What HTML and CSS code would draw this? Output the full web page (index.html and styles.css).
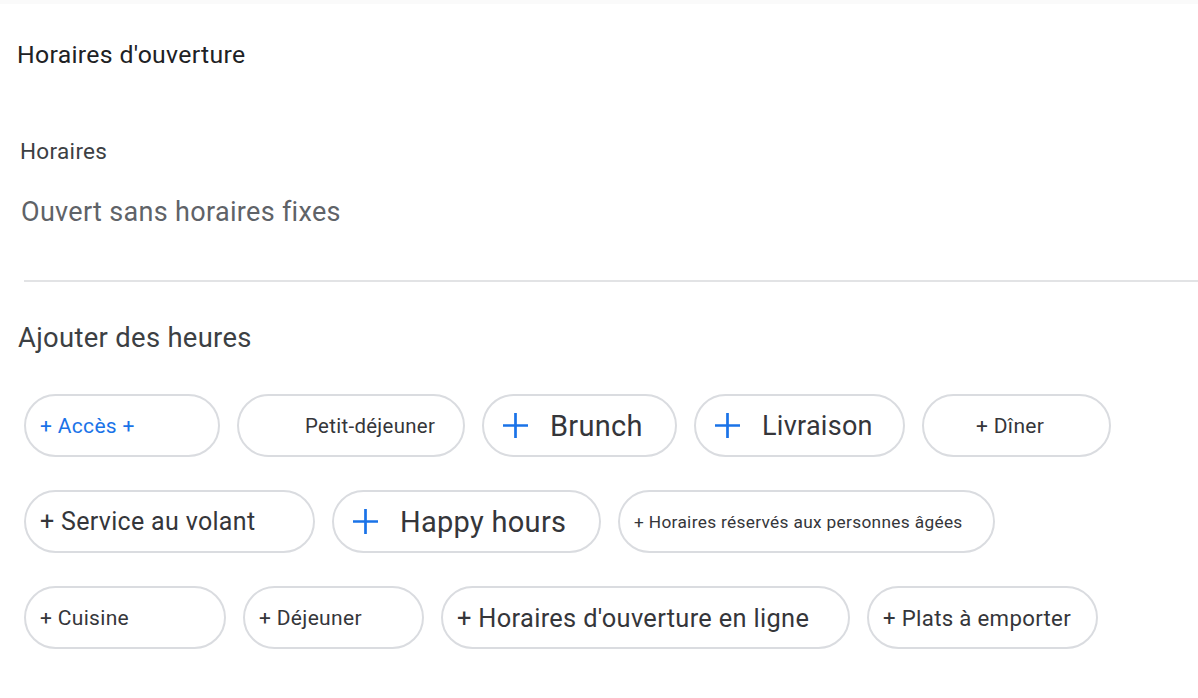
FILE: index.html
```html
<!DOCTYPE html>
<html lang="fr">
<head>
<meta charset="utf-8">
<title>Horaires d'ouverture</title>
<link rel="stylesheet" href="styles.css">
</head>
<body>
<div class="topband"></div>
<main class="page">
  <h2 class="title">Horaires d'ouverture</h2>
  <section class="field">
    <div class="field-label">Horaires</div>
    <div class="field-value">Ouvert sans horaires fixes</div>
  </section>
  <hr class="divider">
  <h3 class="add-title">Ajouter des heures</h3>
  <div class="chips">
    <div class="chip-row">
      <button class="chip chip--md chip--blue w-acces">+ Accès +</button>
      <button class="chip chip--petit w-petit">Petit-déjeuner</button>
      <button class="chip chip--xl chip--icon w-brunch"><svg class="plus" viewBox="0 0 24 24"><path d="M12 0v24M0 12h24"/></svg><span>Brunch</span></button>
      <button class="chip chip--xl chip--narrow chip--icon w-livraison"><svg class="plus" viewBox="0 0 24 24"><path d="M12 0v24M0 12h24"/></svg><span>Livraison</span></button>
      <button class="chip chip--md chip--diner w-diner">+ Dîner</button>
    </div>
    <div class="chip-row">
      <button class="chip chip--lg w-service">+ Service au volant</button>
      <button class="chip chip--xl chip--icon w-happy"><svg class="plus" viewBox="0 0 24 24"><path d="M12 0v24M0 12h24"/></svg><span>Happy hours</span></button>
      <button class="chip chip--sm w-seniors">+ Horaires réservés aux personnes âgées</button>
    </div>
    <div class="chip-row">
      <button class="chip chip--md w-cuisine">+ Cuisine</button>
      <button class="chip chip--md w-dejeuner">+ Déjeuner</button>
      <button class="chip chip--lg chip--wide w-enligne">+ Horaires d'ouverture en ligne</button>
      <button class="chip chip--md chip--plats w-plats">+ Plats à emporter</button>
    </div>
  </div>
</main>
</body>
</html>
```
FILE: styles.css
```css
html, body {
  margin: 0;
  padding: 0;
  background: #ffffff;
}

body {
  width: 1198px;
  height: 698px;
  overflow: hidden;
  font-family: Roboto, "Liberation Sans", Arial, sans-serif;
  letter-spacing: 0.02em;
  color: #3c4043;
}

.topband {
  height: 4px;
  background: #fafafa;
}

.page {
  padding: 0;
}

.title {
  margin: 36px 0 0 17px;
  font-size: 24.8px;
  line-height: 30px;
  font-weight: 400;
  color: #202124;
}

.field {
  margin: 67px 0 0 20px;
}

.field-label {
  font-size: 22.5px;
  line-height: 28px;
  color: #3c4043;
}

.field-value {
  margin-top: 31px;
  margin-left: 1px;
  font-size: 27px;
  line-height: 32px;
  color: #5f6368;
}

.divider {
  margin: 52px 0 0 24px;
  border: 0;
  border-top: 2px solid #e2e3e5;
  height: 0;
}

.add-title {
  margin: 39px 0 0 18px;
  font-size: 27.4px;
  line-height: 34px;
  font-weight: 400;
  color: #3c4043;
}

.chips {
  margin: 39px 0 0 24px;
  display: flex;
  flex-direction: column;
  gap: 33px;
}

.chip-row {
  display: flex;
  gap: 17px;
}

.chip {
  box-sizing: border-box;
  height: 63px;
  border: 2px solid #dadce0;
  border-radius: 32px;
  background: #ffffff;
  display: flex;
  align-items: center;
  padding: 0 0 0 14px;
  margin: 0;
  font-family: inherit;
  letter-spacing: inherit;
  color: #35363a;
  white-space: nowrap;
  cursor: pointer;
}

.chip--sm { font-size: 17.3px; }
.chip--md { font-size: 21px; }
.chip--lg { font-size: 25px; }
.chip--xl { font-size: 29px; letter-spacing: 0.01em; }
.chip--narrow { font-size: 27px; }
.chip--wide { font-size: 25.4px; }
.chip--plats { font-size: 22.2px; }

.chip--blue { color: #1a73e8; }

.chip--petit {
  font-size: 20.4px;
  padding-left: 66px;
}

.chip--diner { padding-left: 52px; }

.chip--icon {
  padding-left: 19px;
  gap: 22px;
}

.plus {
  width: 25px;
  height: 25px;
  flex: none;
  fill: none;
  stroke: #1a73e8;
  stroke-width: 2.6;
}

.w-acces { width: 196px; }
.w-petit { width: 228px; }
.w-brunch { width: 195px; }
.w-livraison { width: 211px; }
.w-diner { width: 189px; }
.w-service { width: 291px; }
.w-happy { width: 269px; }
.w-seniors { width: 377px; }
.w-cuisine { width: 202px; }
.w-dejeuner { width: 181px; }
.w-enligne { width: 409px; }
.w-plats { width: 231px; }
```
